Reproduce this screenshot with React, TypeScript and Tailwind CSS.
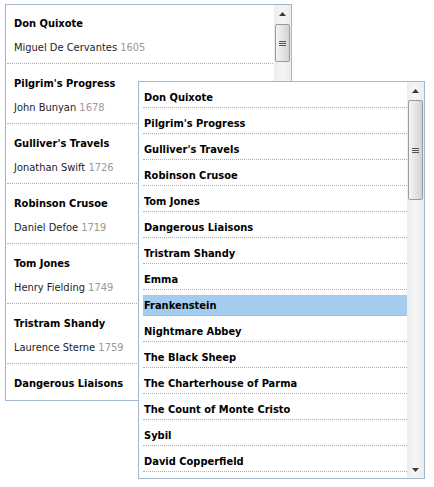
import React from 'react';

const books = [
    { title: 'Don Quixote', author: 'Miguel De Cervantes', year: 1605 },
    { title: "Pilgrim's Progress", author: 'John Bunyan', year: 1678 },
    { title: "Gulliver's Travels", author: 'Jonathan Swift', year: 1726 },
    { title: 'Robinson Crusoe', author: 'Daniel Defoe', year: 1719 },
    { title: 'Tom Jones', author: 'Henry Fielding', year: 1749 },
    { title: 'Tristram Shandy', author: 'Laurence Sterne', year: 1759 },
    { title: 'Dangerous Liaisons', author: '', year: 0 },
];

const titles = [
    'Don Quixote',
    "Pilgrim's Progress",
    "Gulliver's Travels",
    'Robinson Crusoe',
    'Tom Jones',
    'Dangerous Liaisons',
    'Tristram Shandy',
    'Emma',
    'Frankenstein',
    'Nightmare Abbey',
    'The Black Sheep',
    'The Charterhouse of Parma',
    'The Count of Monte Cristo',
    'Sybil',
    'David Copperfield',
];

function Arrow({ down = false }: { down?: boolean }) {
    return (
        <svg width="7" height="4" viewBox="0 0 7 4" className="block">
            {down ? <path d="M0 0H7L3.5 4Z" fill="#3a3a3a" /> : <path d="M0 4H7L3.5 0Z" fill="#3a3a3a" />}
        </svg>
    );
}

function Scrollbar({ thumbTop, thumbHeight }: { thumbTop: number; thumbHeight: number }) {
    return (
        <div className="w-[17px] shrink-0 flex flex-col bg-gradient-to-r from-[#ececec] via-[#f5f5f5] to-[#ececec]">
            <div className="h-[17px] flex items-center justify-center shrink-0">
                <Arrow />
            </div>
            <div style={{ marginTop: thumbTop, height: thumbHeight }} className="mx-px shrink-0 rounded-[2px] border border-[#9a9a9a] bg-gradient-to-r from-[#f4f4f4] via-[#e4e4e4] to-[#d2d2d2] flex flex-col items-center justify-center gap-px">
                <div className="w-[7px] h-px bg-[#555]" />
                <div className="w-[7px] h-px bg-[#555]" />
                <div className="w-[7px] h-px bg-[#555]" />
            </div>
            <div className="flex-1" />
            <div className="h-[17px] flex items-center justify-center shrink-0">
                <Arrow down />
            </div>
        </div>
    );
}

export default function App() {
    return (
        <div className="relative w-[434px] h-[487px] bg-white font-['DejaVu_Sans_Condensed','DejaVu_Sans',sans-serif] font-stretch-condensed text-[11px] text-black pt-[4px] pl-[5px]">
            <div className="w-[287px] h-[397px] border border-[#a1b7cf] flex overflow-hidden">
                <div className="flex-1 overflow-hidden">
                    <div className="-mt-px">
                        {books.map((b) => (
                            <div key={b.title} className="mx-px h-[60px] border-b border-dotted border-[#9fb2c8] pl-[7px] pt-[12px]">
                                <div className="font-bold leading-4">{b.title}</div>
                                {b.author && (
                                    <div className="leading-4 mt-[8px] text-[#1c1c28]">
                                        {b.author} <span className="text-[#999]">{b.year}</span>
                                    </div>
                                )}
                            </div>
                        ))}
                    </div>
                </div>
                <Scrollbar thumbTop={2} thumbHeight={38} />
            </div>

            <div className="absolute left-[138px] top-[81px] w-[287px] h-[398px] border border-[#a1b7cf] bg-white flex overflow-hidden">
                <div className="flex-1 overflow-hidden pl-[4px]">
                    {titles.map((t) => (
                        <div
                            key={t}
                            className={
                                'mt-[5px] h-[21px] border-b border-dotted border-[#9fb2c8] pl-px pt-[2px] font-bold leading-[18px] ' +
                                (t === 'Frankenstein' ? 'bg-[#a3ccee]' : '')
                            }
                        >
                            {t}
                        </div>
                    ))}
                </div>
                <Scrollbar thumbTop={1} thumbHeight={100} />
            </div>
        </div>
    );
}
